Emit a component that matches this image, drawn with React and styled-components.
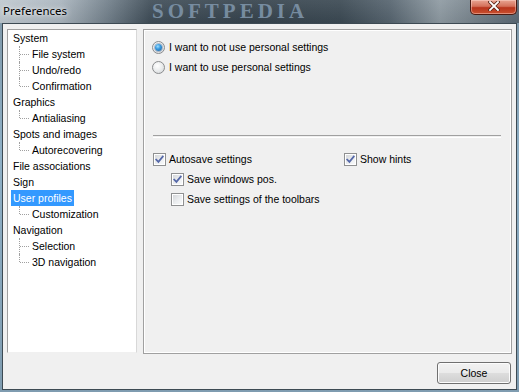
import React from 'react';
import styled, { createGlobalStyle } from 'styled-components';

const GlobalStyle = createGlobalStyle`
  html, body {
    margin: 0;
    padding: 0;
    overflow: hidden;
    background: #87a3b6;
  }
`;

const UI_FONT = `'Liberation Sans', Arial, sans-serif`;

const tree = [
  { label: 'System', children: ['File system', 'Undo/redo', 'Confirmation'] },
  { label: 'Graphics', children: ['Antialiasing'] },
  { label: 'Spots and images', children: ['Autorecovering'] },
  { label: 'File associations' },
  { label: 'Sign' },
  { label: 'User profiles', selected: true, children: ['Customization'] },
  { label: 'Navigation', children: ['Selection', '3D navigation'] },
];

const Frame = styled.div`
  width: 519px;
  height: 392px;
  box-sizing: border-box;
  display: flex;
  flex-direction: column;
  padding: 0 2px 2px 2px;
  background: linear-gradient(180deg, #7e96a6 0%, #8fb0c6 40%, #7f9cb0 100%);
`;

const TitleBar = styled.div`
  position: relative;
  height: 23px;
  margin: 0 -2px;
  display: flex;
  align-items: flex-start;
  overflow: hidden;
  background:
    linear-gradient(180deg, rgba(255,255,255,0.08) 0%, rgba(0,0,0,0.05) 100%),
    linear-gradient(90deg, #bfc8cf 0px, #aab5be 60px, #6f7d88 110px, #3f4d58 150px,
      #36434d 250px, #3b4953 340px, #56646f 390px, #8e9aa2 440px, #737f88 480px, #5a6874 519px);
`;

const Watermark = styled.span`
  position: absolute;
  left: 152px;
  top: 0;
  height: 23px;
  line-height: 23px;
  font-family: 'Liberation Serif', 'DejaVu Serif', serif;
  font-weight: bold;
  font-size: 21px;
  letter-spacing: 4px;
  color: #7d93a8;
  opacity: 0.9;
  pointer-events: none;
`;

const Title = styled.span`
  position: relative;
  margin: 3px 0 0 3px;
  font-family: 'Noto Sans', 'Open Sans', sans-serif;
  font-size: 11.5px;
  line-height: 16px;
  color: #000;
  text-shadow: 0 0 6px rgba(255, 255, 255, 0.9), 0 0 3px rgba(255, 255, 255, 0.7);
`;

const CloseControl = styled.div`
  position: relative;
  margin-left: auto;
  margin-right: 2px;
  width: 47px;
  height: 15px;
  box-sizing: border-box;
  border: 1px solid #4a1a12;
  border-top: none;
  border-radius: 0 0 5px 5px;
  display: flex;
  justify-content: center;
  align-items: flex-start;
  padding-top: 1px;
  background: linear-gradient(180deg, #e9a593 0%, #d4705a 45%, #b8341c 55%, #c9502f 100%);
  box-shadow: inset 0 0 0 1px rgba(255, 220, 210, 0.45);
`;

const Client = styled.div`
  flex: 1;
  display: flex;
  flex-direction: column;
  border: 1px solid #3d4a53;
  background: #f0f0f0;
  padding: 5px 4px 0 4px;
  font-family: ${UI_FONT};
  font-size: 10.5px;
  color: #000;
`;

const Body = styled.div`
  display: flex;
  align-items: flex-start;
  gap: 6px;
`;

const Tree = styled.div`
  width: 130px;
  height: 324px;
  box-sizing: border-box;
  background: #fff;
  border: 1px solid #a0a0a0;
  border-right-color: #d8d8d8;
  border-bottom-color: #f0f0f0;
  display: flex;
  flex-direction: column;
  padding-left: 4px;
`;

const ParentRow = styled.div`
  height: 16px;
  display: flex;
  align-items: center;
  padding-left: 1px;
`;

const ChildRow = styled.div`
  height: 16px;
  display: flex;
  align-items: stretch;
  padding-left: 7px;
`;

const Connector = styled.span`
  position: relative;
  width: 11px;
  margin-right: 2px;
  &::before {
    content: '';
    position: absolute;
    left: 0;
    top: 0;
    height: ${p => (p.$last ? '8px' : '16px')};
    border-left: 1px dotted #a0a0a0;
  }
  &::after {
    content: '';
    position: absolute;
    left: 1px;
    top: 8px;
    width: 9px;
    border-top: 1px dotted #a0a0a0;
  }
`;

const Label = styled.span`
  display: inline-block;
  line-height: 16px;
  height: 16px;
  padding: 0 2px;
  margin-left: -2px;
  white-space: nowrap;
  background: ${p => (p.$selected ? '#3399ff' : 'transparent')};
  color: ${p => (p.$selected ? '#fff' : '#000')};
`;

const Panel = styled.div`
  width: 369px;
  height: 325px;
  box-sizing: border-box;
  border: 1px solid #a0a0a0;
  box-shadow: inset 0 0 0 1px #fff;
  padding: 7px 10px 0 8px;
  display: flex;
  flex-direction: column;
`;

const OptionRow = styled.label`
  height: 20px;
  display: flex;
  align-items: center;
  gap: ${p => (p.$gap || 3)}px;
  white-space: nowrap;
  padding-left: ${p => p.$indent || 0}px;
`;

const RadioMark = styled.span`
  width: 13px;
  height: 13px;
  box-sizing: border-box;
  border-radius: 50%;
  border: 1px solid #8a8c8e;
  background: radial-gradient(circle at 40% 35%, #ffffff 0%, #eceeef 45%, #cfd2d4 100%);
  display: flex;
  align-items: center;
  justify-content: center;
  &::after {
    content: '';
    display: ${p => (p.$checked ? 'block' : 'none')};
    width: 7px;
    height: 7px;
    border-radius: 50%;
    background: radial-gradient(circle at 40% 35%, #9fe0ff 0%, #3a9be0 40%, #1a5a96 100%);
    box-shadow: 0 0 0 1px rgba(40, 80, 130, 0.35);
  }
`;

const CheckMark = styled.span`
  width: 13px;
  height: 13px;
  box-sizing: border-box;
  border: 1px solid #8f9091;
  padding: 1px;
  background: #fff;
  display: flex;
  & > span {
    flex: 1;
    display: flex;
    align-items: center;
    justify-content: center;
    background: linear-gradient(135deg, #d5d7da 0%, #eceef0 55%, #f8f9fa 100%);
  }
`;

const Separator = styled.div`
  margin: 58px 0 0 1px;
  height: 1px;
  border-top: 1px solid #a0a0a0;
  border-bottom: 1px solid #fff;
`;

const CheckArea = styled.div`
  margin-top: 11px;
  margin-left: 1px;
  display: grid;
  grid-template-columns: 191px auto;
  grid-auto-rows: 20px;
`;

const Footer = styled.div`
  display: flex;
  justify-content: flex-end;
  margin-top: 8px;
  padding-right: 1px;
`;

const Button = styled.button`
  width: 74px;
  height: 22px;
  border: 1px solid #707070;
  border-radius: 3px;
  padding: 0;
  font-family: ${UI_FONT};
  font-size: 10.5px;
  color: #000;
  background: linear-gradient(180deg, #f2f2f2 0%, #ebebeb 48%, #dddddd 52%, #cfcfcf 100%);
  box-shadow: inset 0 0 0 1px #fcfcfc;
`;

const Radio = ({ checked, children }) => (
  <OptionRow $gap={4}>
    <RadioMark $checked={checked} />
    <span>{children}</span>
  </OptionRow>
);

const Check = ({ checked, indent, children }) => (
  <OptionRow $indent={indent}>
    <CheckMark>
      <span>
        {checked && (
          <svg width="9" height="9" viewBox="0 0 9 9">
            <path d="M1.2 4.6 L3.4 6.9 L7.8 1.5" fill="none" stroke="#5568a8" strokeWidth="1.7" strokeLinecap="square" />
          </svg>
        )}
      </span>
    </CheckMark>
    <span>{children}</span>
  </OptionRow>
);

export default function App() {
  return (
    <>
      <GlobalStyle />
      <Frame>
        <TitleBar>
          <Watermark>SOFTPEDIA</Watermark>
          <Title>Preferences</Title>
          <CloseControl>
            <svg width="12" height="10" viewBox="0 0 12 10">
              <path d="M2 1 L10 9 M10 1 L2 9" stroke="#5a2418" strokeWidth="3.4" strokeLinecap="square" />
              <path d="M2 1 L10 9 M10 1 L2 9" stroke="#fff" strokeWidth="1.8" strokeLinecap="square" />
            </svg>
          </CloseControl>
        </TitleBar>
        <Client>
          <Body>
            <Tree>
              {tree.map(node => (
                <React.Fragment key={node.label}>
                  <ParentRow>
                    <Label $selected={node.selected}>{node.label}</Label>
                  </ParentRow>
                  {(node.children || []).map((child, i, arr) => (
                    <ChildRow key={child}>
                      <Connector $last={i === arr.length - 1} />
                      <Label>{child}</Label>
                    </ChildRow>
                  ))}
                </React.Fragment>
              ))}
            </Tree>
            <Panel>
              <Radio checked>I want to not use personal settings</Radio>
              <Radio>I want to use personal settings</Radio>
              <Separator />
              <CheckArea>
                <Check checked>Autosave settings</Check>
                <Check checked>Show hints</Check>
                <Check checked indent={18}>Save windows pos.</Check>
                <span />
                <Check indent={18}>Save settings of the toolbars</Check>
              </CheckArea>
            </Panel>
          </Body>
          <Footer>
            <Button>Close</Button>
          </Footer>
        </Client>
      </Frame>
    </>
  );
}
